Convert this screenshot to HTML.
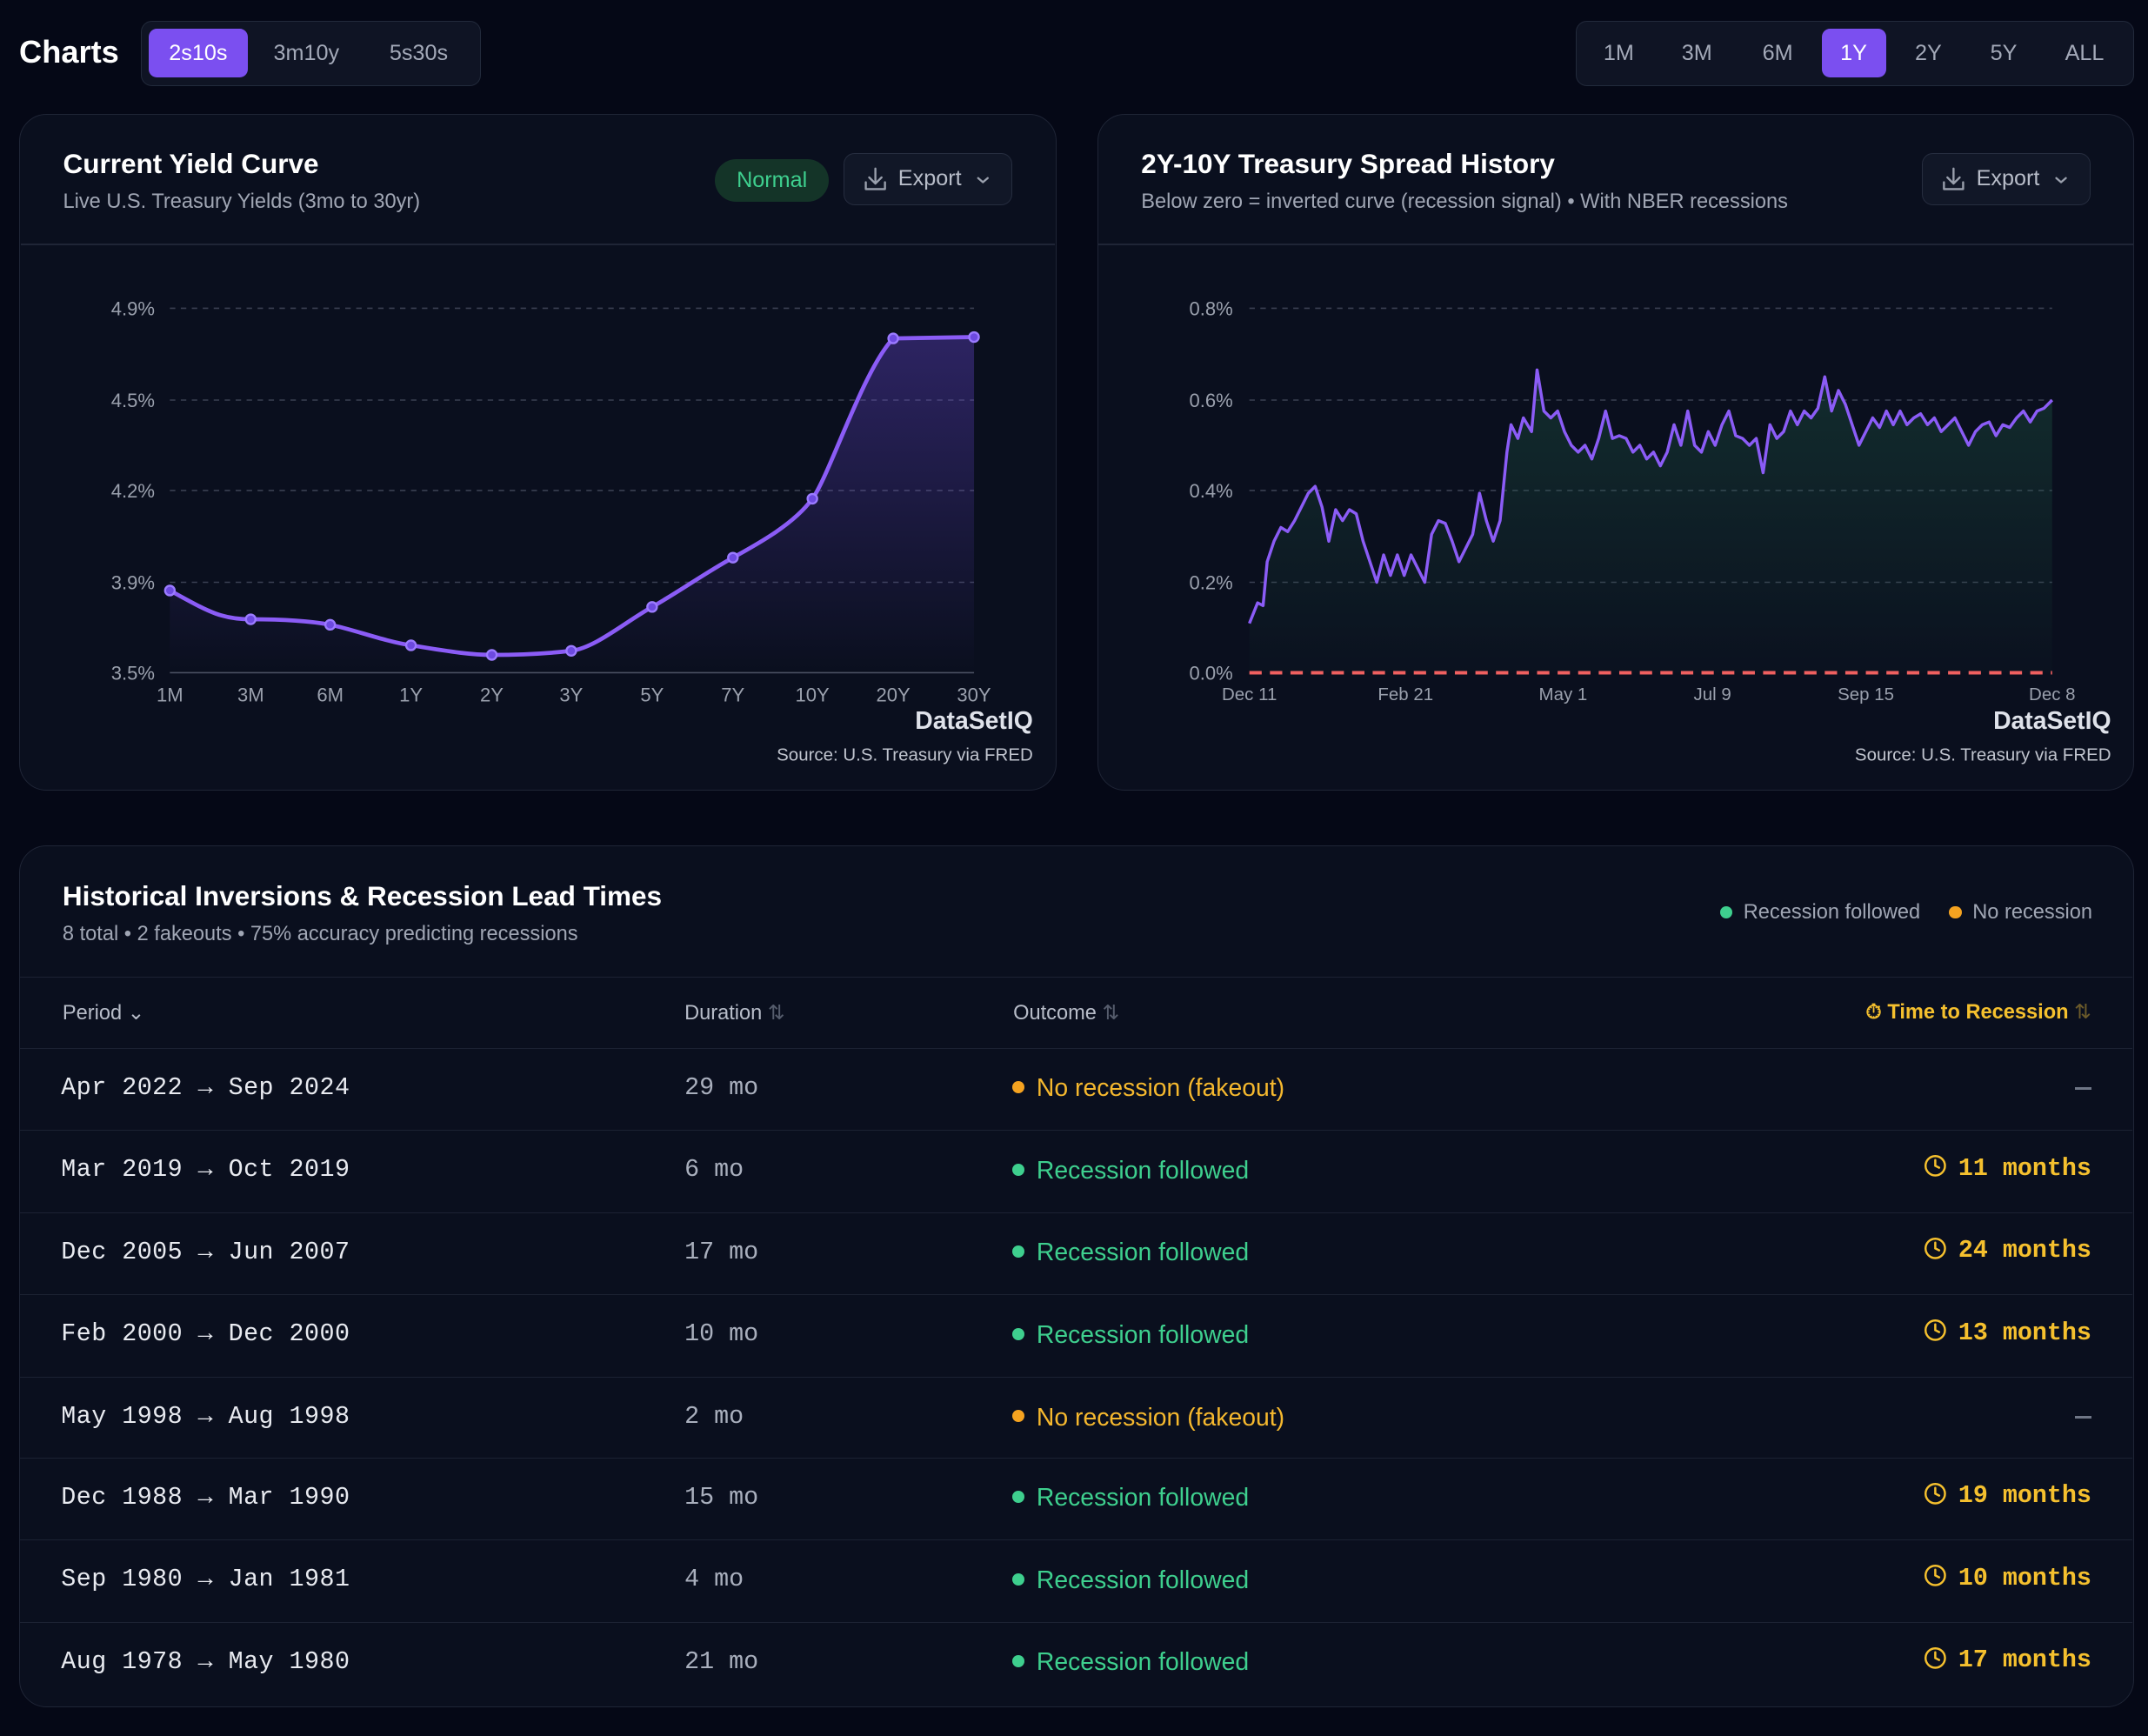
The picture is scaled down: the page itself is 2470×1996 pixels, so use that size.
<!DOCTYPE html>
<html><head><meta charset="utf-8"><style>
*{box-sizing:border-box;margin:0;padding:0}
html,body{width:2470px;height:1996px;background:#050816;overflow:hidden}
#w{zoom:1.5753;width:1568px;height:1267px;position:relative;font-family:"Liberation Sans",sans-serif;color:#e6e8ee}
.a{position:absolute}
.card{position:absolute;background:#0a0f1e;border:1px solid #1f2536;border-radius:20px}
.seg{position:absolute;background:#0f1424;border:1px solid #222a3b;border-radius:8px}
.btn{position:absolute;top:5px;height:36px;line-height:36px;text-align:center;font-size:16px;color:#a3a9b8;border-radius:6px}
.on{background:#7b4ff0;color:#fff}
.t{font-size:20px;font-weight:bold;color:#fff}
.s{font-size:15px;color:#a0a6b4}
.exp{position:absolute;height:38px;border:1px solid #262d3f;background:#111727;border-radius:8px;color:#b8bdc9;font-size:16px;line-height:36px;padding-left:39px}
.mono{font-family:"Liberation Mono",monospace}
.row{position:absolute;left:0;width:1542px;border-top:1px solid #1c2233;height:60px}
.row .p{position:absolute;left:30px;top:18px;font-size:18px;color:#e8eaf0;letter-spacing:.3px}
.row .d{position:absolute;left:485px;top:18px;font-size:18px;color:#a9afbd}
.row .o{position:absolute;left:724px;top:19px;font-size:18px}
.row .o i{display:inline-block;width:9px;height:9px;border-radius:50%;margin-right:9px;vertical-align:2px}
.g{color:#3ecf8e}.g i{background:#3ecf8e}
.y{color:#f5b82e}.y i{background:#f5a320}
.row .r{position:absolute;right:30px;top:17px;font-size:18px;font-weight:bold;color:#f5c02e}
.row .r svg{vertical-align:-2px;margin-right:8px}
.dash{position:absolute;right:30px;top:28px;width:12px;height:2px;background:#6f7686}
</style></head><body><div id="w">
<div class="a t" style="left:14px;top:25px;font-size:23px">Charts</div>
<div class="seg" style="left:103px;top:15px;width:248px;height:48px">
<div class="btn on" style="left:5px;width:72px">2s10s</div>
<div class="btn" style="left:84px;width:72px">3m10y</div>
<div class="btn" style="left:166px;width:72px">5s30s</div></div>
<div class="seg" style="left:1150px;top:15px;width:408px;height:48px">
<div class="btn" style="left:8px;width:46px">1M</div>
<div class="btn" style="left:64px;width:48px">3M</div>
<div class="btn" style="left:123px;width:48px">6M</div>
<div class="btn on" style="left:179px;width:47px">1Y</div>
<div class="btn" style="left:233px;width:48px">2Y</div>
<div class="btn" style="left:288px;width:48px">5Y</div>
<div class="btn" style="left:345px;width:52px">ALL</div></div>

<div class="card" style="left:14px;top:83px;width:757px;height:494px"></div>
<div class="card" style="left:801px;top:83px;width:757px;height:494px"></div>
<div class="a" style="left:15px;top:178px;width:755px;height:1px;background:#1f2536"></div>
<div class="a" style="left:802px;top:178px;width:755px;height:1px;background:#1f2536"></div>
<div class="a t" style="left:46px;top:108px">Current Yield Curve</div>
<div class="a s" style="left:46px;top:139px">Live U.S. Treasury Yields (3mo to 30yr)</div>
<div class="a" style="left:522px;top:116px;width:83px;height:31px;border-radius:16px;background:#143428;color:#3ecf8e;font-size:16px;line-height:31px;text-align:center">Normal</div>
<div class="exp" style="left:616px;top:112px;width:123px">Export</div>
<div class="a t" style="left:833px;top:108px">2Y-10Y Treasury Spread History</div>
<div class="a s" style="left:833px;top:139px">Below zero = inverted curve (recession signal) • With NBER recessions</div>
<div class="exp" style="left:1403px;top:112px;width:123px">Export</div>

<svg class="a" style="left:0;top:0" width="1568" height="1267" font-family="Liberation Sans,sans-serif">
<g fill="none" stroke="#9aa0ad" stroke-width="1.5" stroke-linecap="round" stroke-linejoin="round">
<path d="M639 123v11m-4.5-4.5l4.5 4.5 4.5-4.5M632 133v5h14v-5"/><path d="M714 130l3.5 3 3.5-3"/>
<path d="M1426 123v11m-4.5-4.5l4.5 4.5 4.5-4.5M1419 133v5h14v-5"/><path d="M1501 130l3.5 3 3.5-3"/>
</g>
<defs><linearGradient id="gp" x1="0" y1="0" x2="0" y2="1"><stop offset="0" stop-color="#6d4ae0" stop-opacity=".35"/><stop offset="1" stop-color="#6d4ae0" stop-opacity="0"/></linearGradient>
<linearGradient id="gg" x1="0" y1="0" x2="0" y2="1"><stop offset="0" stop-color="#1f5a45" stop-opacity=".4"/><stop offset="1" stop-color="#1f5a45" stop-opacity="0.03"/></linearGradient></defs>
<g stroke="#3a4052" stroke-dasharray="4 4" stroke-width="1">
<path d="M124 225H711M124 292H711M124 358H711M124 425H711"/>
<path d="M912 225H1498M912 292H1498M912 358H1498M912 425H1498"/></g>
<path d="M124 491H711" stroke="#4a5062"/>
<g fill="#9aa0ad" font-size="14" text-anchor="end">
<text x="113" y="230">4.9%</text><text x="113" y="297">4.5%</text><text x="113" y="363">4.2%</text><text x="113" y="430">3.9%</text><text x="113" y="496">3.5%</text>
<text x="900" y="230">0.8%</text><text x="900" y="297">0.6%</text><text x="900" y="363">0.4%</text><text x="900" y="430">0.2%</text><text x="900" y="496">0.0%</text></g>
<g fill="#9aa0ad" font-size="14" text-anchor="middle">
<text x="124" y="512">1M</text><text x="183" y="512">3M</text><text x="241" y="512">6M</text><text x="300" y="512">1Y</text><text x="359" y="512">2Y</text><text x="417" y="512">3Y</text><text x="476" y="512">5Y</text><text x="535" y="512">7Y</text><text x="593" y="512">10Y</text><text x="652" y="512">20Y</text><text x="711" y="512">30Y</text>
<text x="912" y="511" font-size="13">Dec 11</text><text x="1026" y="511" font-size="13">Feb 21</text><text x="1141" y="511" font-size="13">May 1</text><text x="1250" y="511" font-size="13">Jul 9</text><text x="1362" y="511" font-size="13">Sep 15</text><text x="1498" y="511" font-size="13">Dec 8</text></g>
<g text-anchor="end"><text x="754" y="532" font-size="18" font-weight="bold" fill="#dfe2ea">DataSetIQ</text><text x="754" y="555" font-size="13" fill="#c0c4ce">Source: U.S. Treasury via FRED</text>
<text x="1541" y="532" font-size="18" font-weight="bold" fill="#dfe2ea">DataSetIQ</text><text x="1541" y="555" font-size="13" fill="#c0c4ce">Source: U.S. Treasury via FRED</text></g>
<path d="M124 431C150 445 160 452 183 452S225 453 241 456S280 468 300 471S340 478 359 478S400 477 417 475S455 455 476 443S515 418 535 407S580 382 593 364S630 270 652 247L711 246V491H124Z" fill="url(#gp)"/>
<path d="M124 431C150 445 160 452 183 452S225 453 241 456S280 468 300 471S340 478 359 478S400 477 417 475S455 455 476 443S515 418 535 407S580 382 593 364S630 270 652 247L711 246" fill="none" stroke="#8b5cf6" stroke-width="3"/>
<g fill="#6d4ae0" stroke="#9b7bff" stroke-width="1.5"><circle cx="124" cy="431" r="3.5"/><circle cx="183" cy="452" r="3.5"/><circle cx="241" cy="456" r="3.5"/><circle cx="300" cy="471" r="3.5"/><circle cx="359" cy="478" r="3.5"/><circle cx="417" cy="475" r="3.5"/><circle cx="476" cy="443" r="3.5"/><circle cx="535" cy="407" r="3.5"/><circle cx="593" cy="364" r="3.5"/><circle cx="652" cy="247" r="3.5"/><circle cx="711" cy="246" r="3.5"/></g>
<path d="M912 491V455L918 440L922 442L925 410L930 395L935 385L940 388L945 380L950 370L955 360L960 355L965 370L970 395L975 372L980 380L985 372L990 375L995 395L1000 410L1005 425L1010 405L1015 420L1020 405L1025 420L1030 405L1035 415L1040 425L1045 390L1050 380L1055 382L1060 395L1065 410L1070 400L1075 390L1080 360L1085 380L1090 395L1095 380L1100 330L1103 310L1108 320L1112 305L1118 315L1122 270L1127 300L1132 305L1137 300L1142 315L1147 325L1152 330L1157 325L1162 335L1167 320L1172 300L1177 320L1182 318L1187 320L1192 330L1197 325L1202 335L1207 330L1212 340L1217 330L1222 310L1227 325L1232 300L1237 325L1242 330L1247 315L1252 325L1257 310L1262 300L1267 318L1272 320L1277 325L1282 320L1287 345L1292 310L1297 320L1302 315L1307 300L1312 310L1317 300L1322 305L1327 298L1332 275L1337 300L1342 285L1347 295L1352 310L1357 325L1362 315L1367 305L1372 312L1377 300L1382 310L1387 300L1392 310L1397 305L1402 302L1407 310L1412 305L1417 315L1422 310L1427 305L1432 315L1437 325L1442 315L1447 310L1452 308L1457 318L1462 310L1467 312L1472 305L1477 300L1482 308L1487 300L1492 298L1498 292V491Z" fill="url(#gg)"/>
<path d="M912 455L918 440L922 442L925 410L930 395L935 385L940 388L945 380L950 370L955 360L960 355L965 370L970 395L975 372L980 380L985 372L990 375L995 395L1000 410L1005 425L1010 405L1015 420L1020 405L1025 420L1030 405L1035 415L1040 425L1045 390L1050 380L1055 382L1060 395L1065 410L1070 400L1075 390L1080 360L1085 380L1090 395L1095 380L1100 330L1103 310L1108 320L1112 305L1118 315L1122 270L1127 300L1132 305L1137 300L1142 315L1147 325L1152 330L1157 325L1162 335L1167 320L1172 300L1177 320L1182 318L1187 320L1192 330L1197 325L1202 335L1207 330L1212 340L1217 330L1222 310L1227 325L1232 300L1237 325L1242 330L1247 315L1252 325L1257 310L1262 300L1267 318L1272 320L1277 325L1282 320L1287 345L1292 310L1297 320L1302 315L1307 300L1312 310L1317 300L1322 305L1327 298L1332 275L1337 300L1342 285L1347 295L1352 310L1357 325L1362 315L1367 305L1372 312L1377 300L1382 310L1387 300L1392 310L1397 305L1402 302L1407 310L1412 305L1417 315L1422 310L1427 305L1432 315L1437 325L1442 315L1447 310L1452 308L1457 318L1462 310L1467 312L1472 305L1477 300L1482 308L1487 300L1492 298L1498 292" fill="none" stroke="#8b5cf6" stroke-width="2.2" stroke-linejoin="round"/>
<path d="M912 491H1498" stroke="#f06060" stroke-width="2.5" stroke-dasharray="9 6"/>
</svg>

<div class="card" style="left:14px;top:617px;width:1544px;height:629px;overflow:hidden">
<div class="a t" style="left:31px;top:25px">Historical Inversions &amp; Recession Lead Times</div>
<div class="a s" style="left:31px;top:56px">8 total • 2 fakeouts • 75% accuracy predicting recessions</div>
<div class="a s" style="right:30px;top:40px"><span style="display:inline-block;width:9px;height:9px;border-radius:50%;background:#3ecf8e;margin-right:8px"></span>Recession followed <span style="display:inline-block;width:9px;height:9px;border-radius:50%;background:#f5a320;margin:0 8px 0 17px"></span>No recession</div>
<div class="row" style="top:95px;height:52px">
<div class="a s" style="left:31px;top:17px;color:#b8bdc9">Period ⌄</div>
<div class="a s" style="left:485px;top:17px;color:#b8bdc9">Duration <span style="color:#555c6c">⇅</span></div>
<div class="a s" style="left:725px;top:17px;color:#b8bdc9">Outcome <span style="color:#555c6c">⇅</span></div>
<div class="a" style="right:30px;top:16px;font-size:15px;color:#f5c02e;font-weight:bold">⏱ Time to Recession <span style="color:#6b5a2a;font-weight:normal">⇅</span></div></div>
<div class="row" style="top:147px"><div class="p mono">Apr 2022 → Sep 2024</div><div class="d mono">29 mo</div><div class="o y"><i></i>No recession (fakeout)</div><div class="dash"></div></div>
<div class="row" style="top:207px"><div class="p mono">Mar 2019 → Oct 2019</div><div class="d mono">6 mo</div><div class="o g"><i></i>Recession followed</div><div class="r mono"><svg width="17" height="17" viewBox="0 0 24 24" fill="none" stroke="#f5c02e" stroke-width="2.2" stroke-linecap="round"><circle cx="12" cy="12" r="10"/><path d="M12 6v6l4 2"/></svg>11 months</div></div>
<div class="row" style="top:267px"><div class="p mono">Dec 2005 → Jun 2007</div><div class="d mono">17 mo</div><div class="o g"><i></i>Recession followed</div><div class="r mono"><svg width="17" height="17" viewBox="0 0 24 24" fill="none" stroke="#f5c02e" stroke-width="2.2" stroke-linecap="round"><circle cx="12" cy="12" r="10"/><path d="M12 6v6l4 2"/></svg>24 months</div></div>
<div class="row" style="top:327px"><div class="p mono">Feb 2000 → Dec 2000</div><div class="d mono">10 mo</div><div class="o g"><i></i>Recession followed</div><div class="r mono"><svg width="17" height="17" viewBox="0 0 24 24" fill="none" stroke="#f5c02e" stroke-width="2.2" stroke-linecap="round"><circle cx="12" cy="12" r="10"/><path d="M12 6v6l4 2"/></svg>13 months</div></div>
<div class="row" style="top:387px"><div class="p mono">May 1998 → Aug 1998</div><div class="d mono">2 mo</div><div class="o y"><i></i>No recession (fakeout)</div><div class="dash"></div></div>
<div class="row" style="top:446px"><div class="p mono">Dec 1988 → Mar 1990</div><div class="d mono">15 mo</div><div class="o g"><i></i>Recession followed</div><div class="r mono"><svg width="17" height="17" viewBox="0 0 24 24" fill="none" stroke="#f5c02e" stroke-width="2.2" stroke-linecap="round"><circle cx="12" cy="12" r="10"/><path d="M12 6v6l4 2"/></svg>19 months</div></div>
<div class="row" style="top:506px"><div class="p mono">Sep 1980 → Jan 1981</div><div class="d mono">4 mo</div><div class="o g"><i></i>Recession followed</div><div class="r mono"><svg width="17" height="17" viewBox="0 0 24 24" fill="none" stroke="#f5c02e" stroke-width="2.2" stroke-linecap="round"><circle cx="12" cy="12" r="10"/><path d="M12 6v6l4 2"/></svg>10 months</div></div>
<div class="row" style="top:566px"><div class="p mono">Aug 1978 → May 1980</div><div class="d mono">21 mo</div><div class="o g"><i></i>Recession followed</div><div class="r mono"><svg width="17" height="17" viewBox="0 0 24 24" fill="none" stroke="#f5c02e" stroke-width="2.2" stroke-linecap="round"><circle cx="12" cy="12" r="10"/><path d="M12 6v6l4 2"/></svg>17 months</div></div>
</div>
</div></body></html>
